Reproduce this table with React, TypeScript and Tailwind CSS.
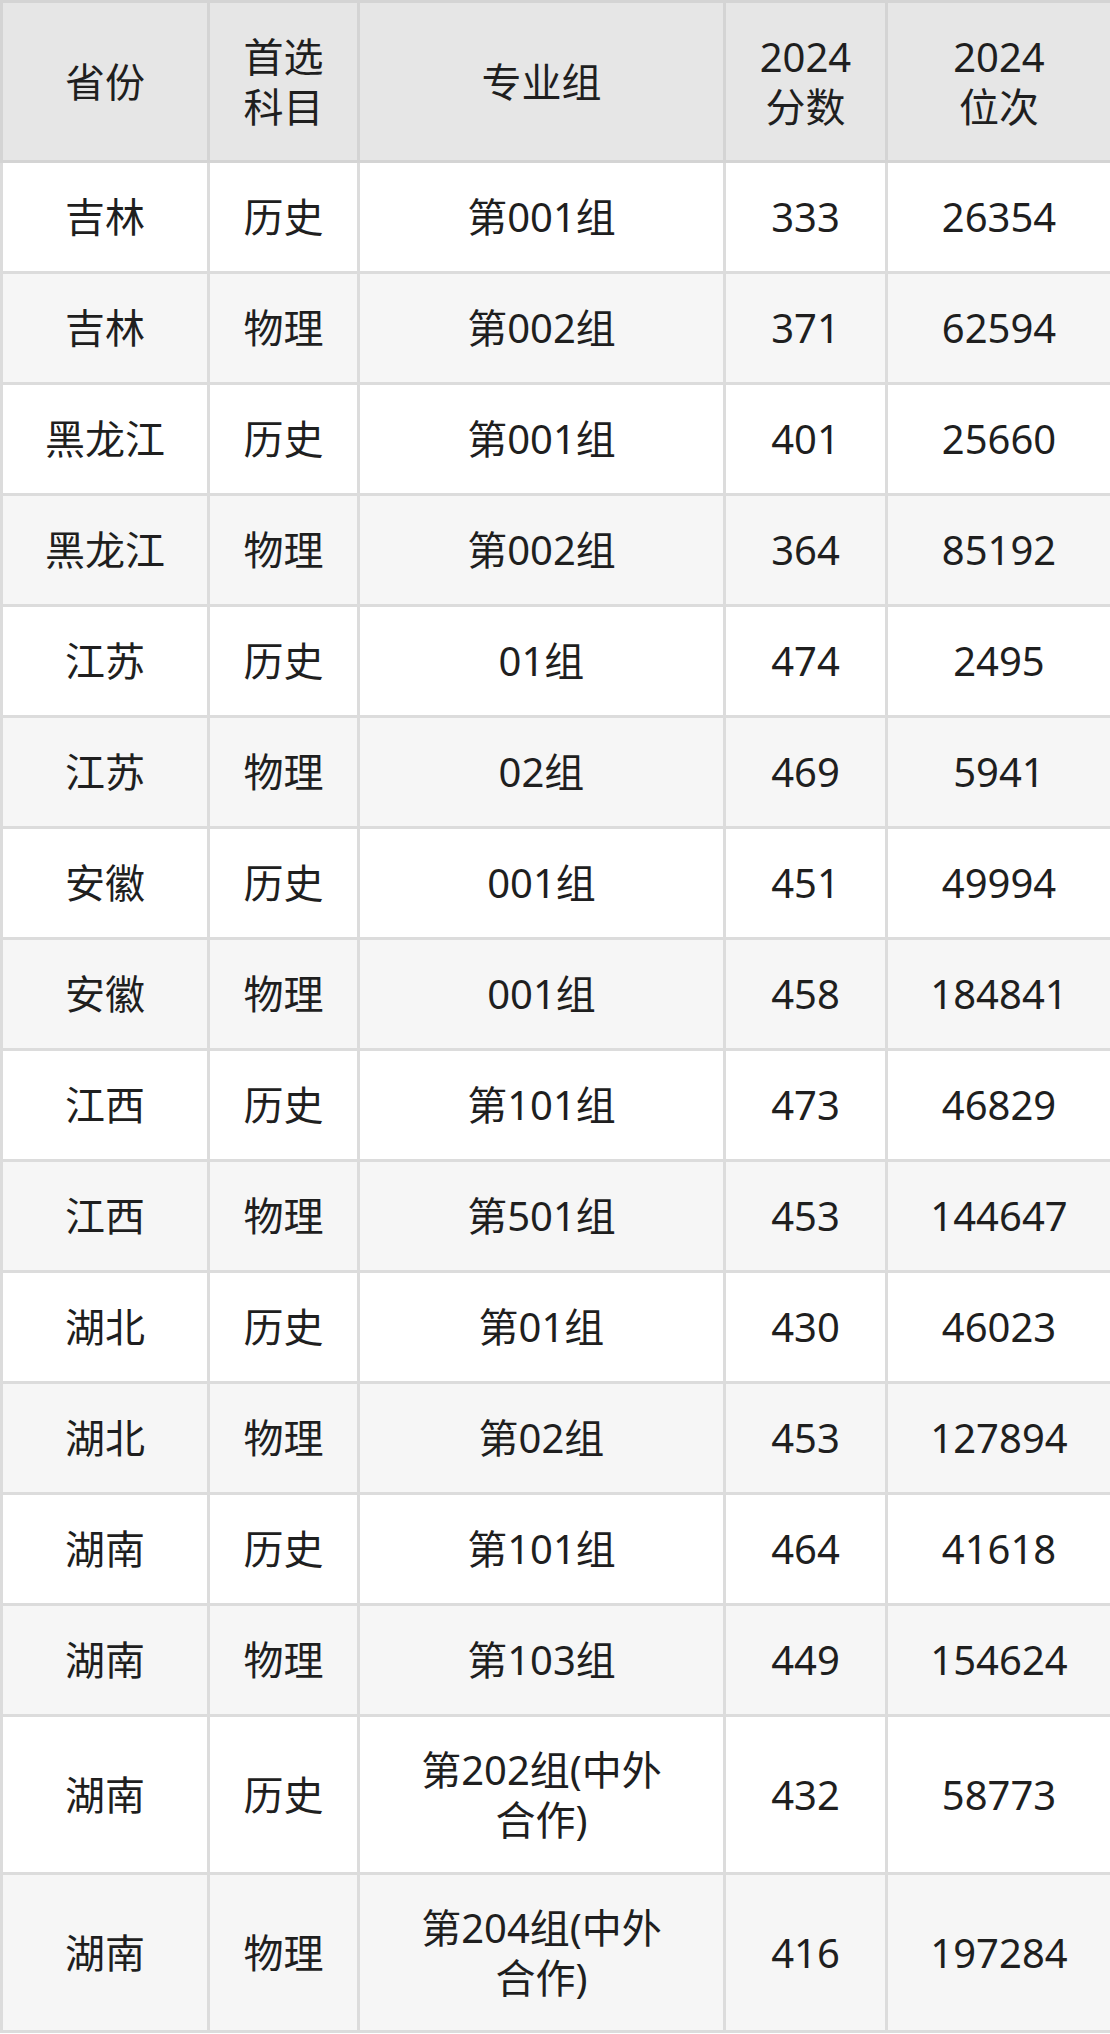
const rows: [string, string, string[], string, string][] = [
  ["吉林", "历史", ["第001组"], "333", "26354"],
  ["吉林", "物理", ["第002组"], "371", "62594"],
  ["黑龙江", "历史", ["第001组"], "401", "25660"],
  ["黑龙江", "物理", ["第002组"], "364", "85192"],
  ["江苏", "历史", ["01组"], "474", "2495"],
  ["江苏", "物理", ["02组"], "469", "5941"],
  ["安徽", "历史", ["001组"], "451", "49994"],
  ["安徽", "物理", ["001组"], "458", "184841"],
  ["江西", "历史", ["第101组"], "473", "46829"],
  ["江西", "物理", ["第501组"], "453", "144647"],
  ["湖北", "历史", ["第01组"], "430", "46023"],
  ["湖北", "物理", ["第02组"], "453", "127894"],
  ["湖南", "历史", ["第101组"], "464", "41618"],
  ["湖南", "物理", ["第103组"], "449", "154624"],
  ["湖南", "历史", ["第202组(中外", "合作)"], "432", "58773"],
  ["湖南", "物理", ["第204组(中外", "合作)"], "416", "197284"],
]

const headers = [["省份"], ["首选", "科目"], ["专业组"], ["2024", "分数"], ["2024", "位次"]]

function Lines({ lines }: { lines: string[] }) {
  return (
    <>
      {lines.map((l, i) => (
        <span key={i} className="block">
          {l}
        </span>
      ))}
    </>
  )
}

export default function App() {
  return (
    <div
      className="w-[1110px] bg-white text-[#1f1f1f]"
      style={{ fontFamily: '"Noto Sans", "Noto Sans CJK SC", sans-serif' }}
    >
      <table className="w-[1110px] table-fixed border-collapse border-[3px] border-[#dadada] text-center text-[40px] leading-[50px]">
        <colgroup>
          <col className="w-[207px]" />
          <col className="w-[150px]" />
          <col className="w-[366px]" />
          <col className="w-[162px]" />
          <col className="w-[225px]" />
        </colgroup>
        <thead>
          <tr className="h-[160px] bg-[#e6e6e6]">
            {headers.map((h, i) => (
              <th key={i} className="border-[3px] border-[#d4d4d4] font-normal align-middle">
                <Lines lines={h} />
              </th>
            ))}
          </tr>
        </thead>
        <tbody>
          {rows.map((r, i) => (
            <tr
              key={i}
              className={`${r[2].length > 1 ? "h-[158px]" : "h-[111px]"} ${i % 2 === 1 ? "bg-[#f6f6f6]" : "bg-white"}`}
            >
              <td className="border-[3px] border-[#dcdcdc] align-middle">{r[0]}</td>
              <td className="border-[3px] border-[#dcdcdc] align-middle">{r[1]}</td>
              <td className="border-[3px] border-[#dcdcdc] align-middle">
                <Lines lines={r[2]} />
              </td>
              <td className="border-[3px] border-[#dcdcdc] align-middle">{r[3]}</td>
              <td className="border-[3px] border-[#dcdcdc] align-middle">{r[4]}</td>
            </tr>
          ))}
        </tbody>
      </table>
    </div>
  )
}
